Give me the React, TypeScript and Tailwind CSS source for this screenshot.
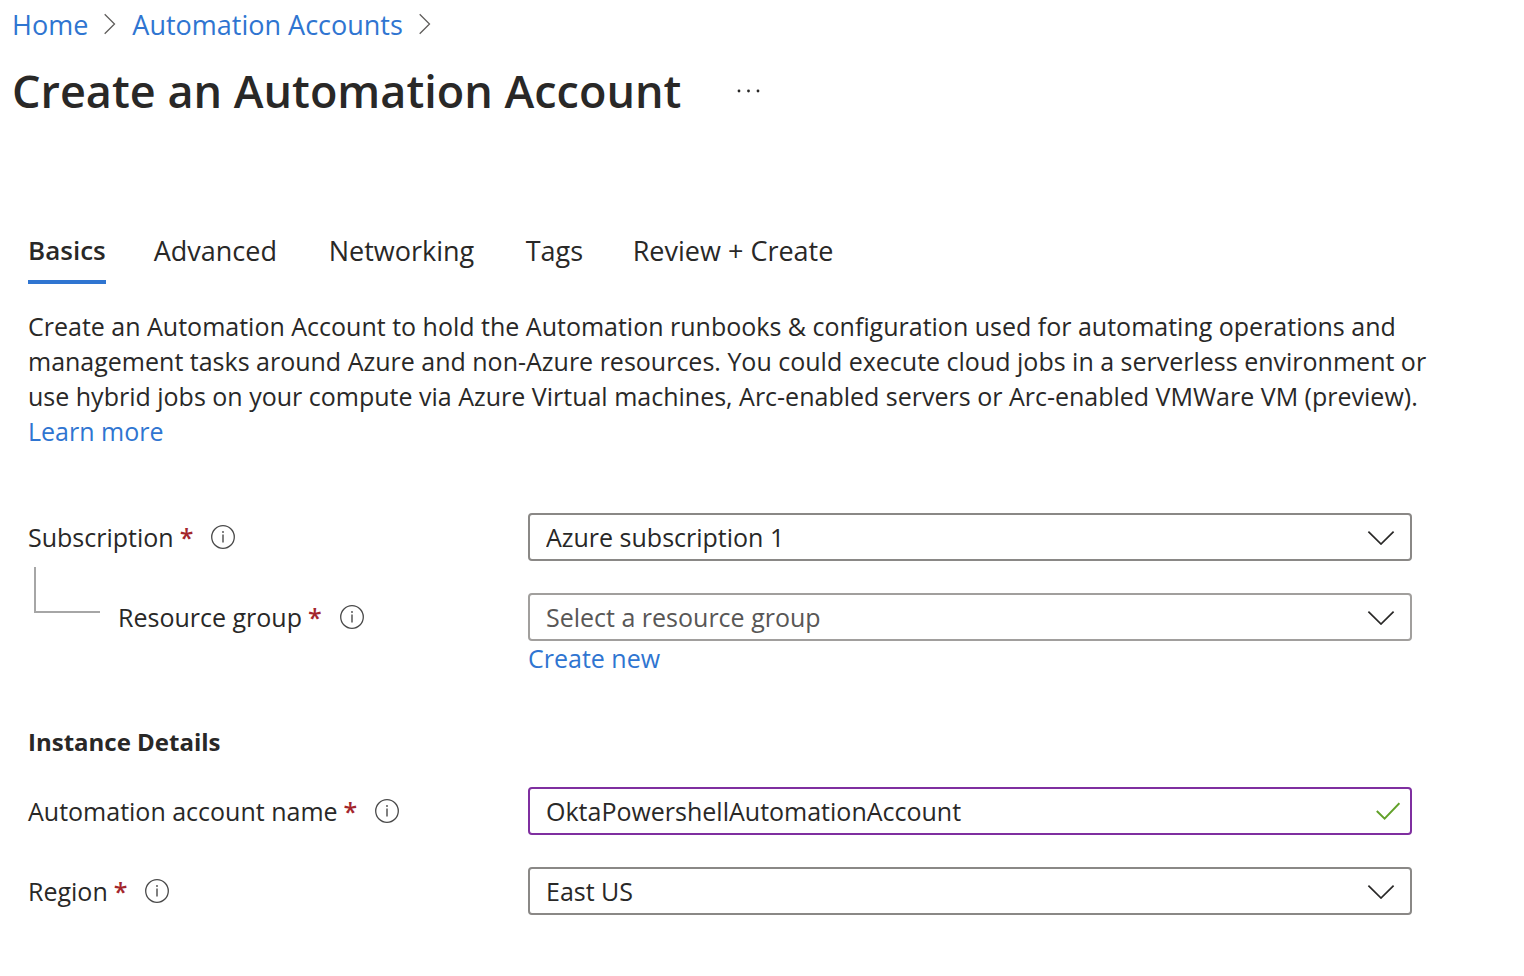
import { useState } from "react";
import type { ReactNode } from "react";

function CrumbChevron() {
  return (
    <svg className="h-6 w-3 text-[#605e5c]" viewBox="0 0 12 24" fill="none" stroke="currentColor" strokeWidth="1.3" aria-hidden="true">
      <path d="M0.7 2.2 L10.5 12 L0.7 21.8" />
    </svg>
  );
}

function InfoIcon() {
  return (
    <svg className="size-6 text-[#4a4a4a]" viewBox="0 0 24 24" fill="none" stroke="currentColor" aria-hidden="true">
      <circle cx="12" cy="12" r="11.3" strokeWidth="1.3" />
      <path d="M12 9.6V17.4" strokeWidth="1.4" />
      <circle cx="12" cy="7" r="0.9" fill="currentColor" stroke="none" />
    </svg>
  );
}

function SelectChevron() {
  return (
    <svg
      className="pointer-events-none absolute right-4 top-4 h-4 w-[30px] text-[#292827]"
      viewBox="0 0 30 16"
      fill="none"
      stroke="currentColor"
      strokeWidth="1.7"
      aria-hidden="true"
    >
      <path d="M2.4 2.6 L15 15 L27.6 2.6" />
    </svg>
  );
}

function FieldLabel({ id, children }: { id: string; children: ReactNode }) {
  return (
    <div className="flex h-12 items-center gap-[18px]">
      <label htmlFor={id} className="flex items-center gap-[6px] whitespace-nowrap">
        {children}
        <span className="font-semibold text-[#a4262c]">*</span>
      </label>
      <button type="button" aria-label="More information">
        <InfoIcon />
      </button>
    </div>
  );
}

function Dropdown({ id, options, placeholder }: { id: string; options: string[]; placeholder?: string }) {
  const [value, setValue] = useState(placeholder ? "" : options[0]);
  return (
    <div className="relative">
      <select
        id={id}
        value={value}
        onChange={(e) => setValue(e.target.value)}
        className={
          value
            ? "block h-12 w-full appearance-none rounded-[4px] border-2 border-[#8a8886] bg-white px-4 text-[#292827]"
            : "block h-12 w-full appearance-none rounded-[4px] border-2 border-[#a19f9d] bg-white px-4 text-[#595756]"
        }
      >
        {placeholder && <option value="">{placeholder}</option>}
        {options.map((o) => (
          <option key={o} value={o}>
            {o}
          </option>
        ))}
      </select>
      <SelectChevron />
    </div>
  );
}

// Each tab keeps room for its bold label, so the row stays still when the selection moves.
const tabs = [
  { label: "Basics", width: "min-w-[76px]" },
  { label: "Advanced", width: "min-w-[127px]" },
  { label: "Networking", width: "min-w-[149px]" },
  { label: "Tags", width: "min-w-[59px]" },
  { label: "Review + Create", width: "min-w-[206px]" },
];

export default function App() {
  const [active, setActive] = useState("Basics");
  const [name, setName] = useState("OktaPowershellAutomationAccount");

  return (
    <div className="min-h-screen bg-white font-['Open_Sans',sans-serif] text-[25px] leading-[35px] text-[#292827]">
      <header className="px-3">
        <nav aria-label="Breadcrumb" className="flex h-12 items-center gap-4 text-[27px] text-[#2f75d1]">
          <a href="#home">Home</a>
          <CrumbChevron />
          <a href="#accounts">Automation Accounts</a>
          <CrumbChevron />
        </nav>
        <div className="flex items-center gap-14 pt-2">
          <h1 className="text-[45px] leading-[70px] font-semibold">Create an Automation Account</h1>
          <button type="button" aria-label="More actions">
            <svg className="h-6 w-6" viewBox="0 0 24 24" fill="currentColor" aria-hidden="true">
              <circle cx="2" cy="12" r="1.4" />
              <circle cx="11.5" cy="12" r="1.4" />
              <circle cx="21" cy="12" r="1.4" />
            </svg>
          </button>
        </div>
      </header>

      <main className="pt-[100px] pr-28 pb-14 pl-7">
        <div role="tablist" className="flex gap-12">
          {tabs.map((t) => (
            <button
              key={t.label}
              type="button"
              role="tab"
              aria-selected={t.label === active}
              onClick={() => setActive(t.label)}
              className={`h-[58px] border-b-4 pb-[6px] text-left ${t.width} ${
                t.label === active ? "border-[#2f75d1] text-[26px] font-semibold" : "border-transparent text-[27px]"
              }`}
            >
              {t.label}
            </button>
          ))}
        </div>

        <p className="-mr-4 pt-[25px]">
          Create an Automation Account to hold the Automation runbooks &amp; configuration used for automating operations and
          management tasks around Azure and non-Azure resources. You could execute cloud jobs in a serverless environment or
          use hybrid jobs on your compute via Azure Virtual machines, Arc-enabled servers or Arc-enabled VMWare VM (preview).{" "}
          <a href="#learn" className="text-[#2f75d1]">
            Learn more
          </a>
        </p>

        <form className="pt-16" onSubmit={(e) => e.preventDefault()}>
          <div className="grid grid-cols-[500px_1fr]">
            <FieldLabel id="subscription">Subscription</FieldLabel>
            <Dropdown id="subscription" options={["Azure subscription 1"]} />
          </div>

          <div className="grid grid-cols-[500px_1fr] pt-8">
            <div className="flex items-start gap-[18px] pl-[6px]">
              <div className="-mt-[26px] h-[46px] w-[66px] border-b-2 border-l-2 border-[#a6a6a6]" />
              <FieldLabel id="group">Resource group</FieldLabel>
            </div>
            <div>
              <Dropdown id="group" options={["Default"]} placeholder="Select a resource group" />
              <a href="#new" className="block w-fit text-[#2f75d1]">
                Create new
              </a>
            </div>
          </div>

          <h2 className="pt-12 text-[24px] font-bold">Instance Details</h2>

          <div className="grid grid-cols-[500px_1fr] pt-7">
            <FieldLabel id="name">Automation account name</FieldLabel>
            <div className="relative">
              <input
                id="name"
                type="text"
                value={name}
                onChange={(e) => setName(e.target.value)}
                className="block h-12 w-full rounded-[4px] border-2 border-[#7f2fa0] bg-white pr-14 pl-4 outline-none"
              />
              <svg
                className="pointer-events-none absolute top-3 right-3 size-6 text-[#62a12a]"
                viewBox="0 0 24 24"
                fill="none"
                stroke="currentColor"
                strokeWidth="2"
                aria-hidden="true"
              >
                <path d="M0.8 12 L8.6 19.6 L23.4 4.2" />
              </svg>
            </div>
          </div>

          <div className="grid grid-cols-[500px_1fr] pt-8">
            <FieldLabel id="region">Region</FieldLabel>
            <Dropdown id="region" options={["East US"]} />
          </div>
        </form>
      </main>
    </div>
  );
}
